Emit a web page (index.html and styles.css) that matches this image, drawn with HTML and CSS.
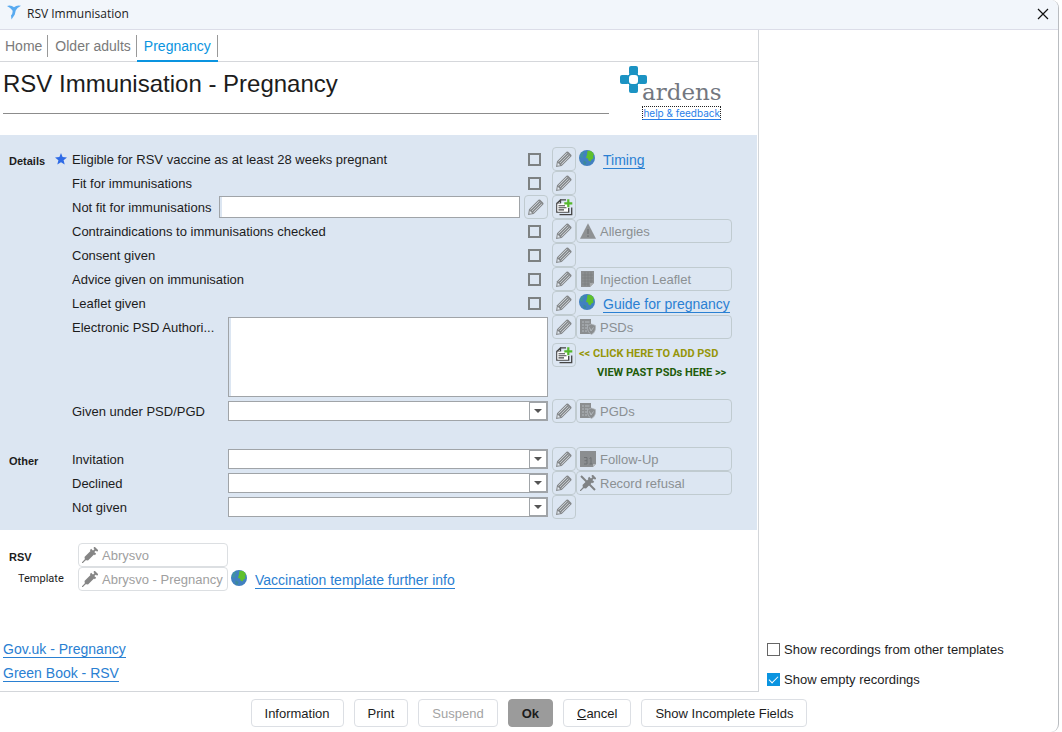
FILE: index.html
```html
<!DOCTYPE html>
<html lang="en">
<head>
<meta charset="utf-8">
<title>RSV Immunisation</title>
<link rel="stylesheet" href="styles.css">
</head>
<body>
<svg class="sprite" aria-hidden="true">
  <symbol id="pencil" viewBox="0 0 16 16">
    <path d="M0 16 1 10.300 10.500.8Q11.300 0 12.200.8L15.200 3.800Q16 4.700 15.200 5.500L5.700 15Z" fill="#85888a"/>
    <path d="M2.600 10.600 11 2.200M5.400 13.400 13.800 5" stroke="#e2e8ee" stroke-width=".9"/>
    <path d="M4 12 12.400 3.600" stroke="#cfd5da" stroke-width=".8"/>
    <path d="M1.800 11.800 4.200 14.200 1.300 14.700Z" fill="#e2e8ee"/>
  </symbol>
  <symbol id="notes" viewBox="0 0 17 17">
    <path d="M4.500.9H10M.8 4.500 4.500.9V4.500H.8V13.200H12.700V9" fill="#fff" stroke="#444" stroke-width="1.300"/>
    <path d="M1.500 4.500H12V12.600H1.500Z" fill="#fff"/>
    <path d="M3.500 15.600H15.700V8.500" fill="none" stroke="#444" stroke-width="1.300"/>
    <path d="M2.500 6.700H9M2.500 8.800H10.500M2.500 10.900H8" stroke="#444" stroke-width="1.100"/>
    <path d="M12.300.3V8.300M8.300 4.300H16.300" stroke="#55b82b" stroke-width="2.200"/>
  </symbol>
  <symbol id="globe" viewBox="0 0 16 16">
    <circle cx="8" cy="8" r="8" fill="#4180c0"/>
    <path d="M8.500.8 12 .9Q14 2.200 15 4.500L14 6 14.500 8.500 12.500 9.500 11.500 11.500 9.500 10.500 9 8.500 7 8 8 4.500Z" fill="#5fc02c"/>
    <path d="M2 3 4.500 1.500 5.500 3 3.500 5 4.500 7 2.500 8 .8 6Z" fill="#3f93a0"/>
    <path d="M4.500 10.500 7.500 12 6.500 15 4.500 14Z" fill="#3a8a98"/>
  </symbol>
  <symbol id="warning" viewBox="0 0 16 16">
    <path d="M8 .3 16 15.800H0Z" fill="#8f9294"/>
    <path d="M8 6V11M8 12.200V14" stroke="#777a7c" stroke-width="1.600"/>
  </symbol>
  <symbol id="sheet" viewBox="0 0 16 16">
    <path d="M1 0H14V12L10 16H1Z" fill="#8b8e90"/>
    <path d="M2 4H13M2 7H13M2 10H13M2 13H9M5 1V15M8 1V15M11 1V12" stroke="#7b7e80" stroke-width=".7"/>
    <path d="M10 16V12H14Z" fill="#a7aaac"/>
  </symbol>
  <symbol id="protocol" viewBox="0 0 16 16">
    <path d="M0 0H11V15H0Z" fill="#8b8e90"/>
    <path d="M2 3H4M5 3H9.500M2 6H4M5 6H8M2 9H4M5 9H7M2 12H4M5 12H7" stroke="#b3b9be" stroke-width="1"/>
    <path d="M7.500 6.500 11.500 5 15.500 6.500Q16.300 13 11.500 15.600 6.800 13 7.500 6.500Z" fill="#8b8e90" stroke="#b3b9be" stroke-width=".7"/>
    <path d="M9.500 8.500 11 12 13.500 8.500" fill="none" stroke="#b3b9be" stroke-width="1"/>
  </symbol>
  <symbol id="calendar" viewBox="0 0 16 16">
    <path d="M0 0H16V13L13 16H0Z" fill="#8b8e90"/>
    <path d="M4 6.500H7V13H4M4.500 9.700H7M9.500 7.500 11 6.500V13M9.500 13H12.500" fill="none" stroke="#6f7274" stroke-width="1"/>
    <path d="M13 16V13H16Z" fill="#b4b8bb"/>
  </symbol>
  <symbol id="syringe" viewBox="0 0 16 16">
    <path d="M0 16 4 12" stroke="#858585" stroke-width="1.200"/>
    <path d="M2.500 10 9 3.500 12.500 7 6 13.500 3 13Z" fill="#858585"/>
    <path d="M8.500 2.500 13.500 7.500M11 5 14 2M12 .3 15.700 4" stroke="#858585" stroke-width="1.800"/>
  </symbol>
  <symbol id="refusal" viewBox="0 0 16 16">
    <path d="M0 16 4 12" stroke="#808385" stroke-width="1.200"/>
    <path d="M2.500 10 9 3.500 12.500 7 6 13.500 3 13Z" fill="#808385"/>
    <path d="M8.500 2.500 13.500 7.500M11 5 14 2M12 .3 15.700 4M1 1 15 15" stroke="#808385" stroke-width="2"/>
  </symbol>
</svg>

<div class="window">
  <header class="titlebar">
    <svg class="app-icon" viewBox="0 0 14 15" aria-hidden="true"><path d="M0 1Q4-.2 7 2.200 10-.4 14 .8 10.500 2.500 8.700 5.500L7.800 9.500 4.500 14.500 4 10.500Q6 8.500 5.500 5.500 3.500 2.500 0 1Z" fill="#58aaf0"/></svg>
    <span class="window-title">RSV Immunisation</span>
    <button class="close" type="button" aria-label="Close"><svg viewBox="0 0 12 12"><path d="M1 1 11 11M11 1 1 11" stroke="#111" stroke-width="1.200"/></svg></button>
  </header>

  <div class="content">
    <main class="panel">
      <nav class="tabs">
        <button class="tab" type="button">Home</button>
        <button class="tab" type="button">Older adults</button>
        <button class="tab tab-active" type="button">Pregnancy</button>
      </nav>

      <div class="heading">
        <h1 class="title">RSV Immunisation - Pregnancy</h1>
        <div class="brand">
          <div class="logo">
            <svg class="logo-mark" viewBox="0 0 28 28" aria-hidden="true"><g fill="#1b93c3"><rect x="9" y="0" width="9" height="9" rx="2"/><rect x="0" y="9" width="9" height="9" rx="2"/><rect x="18" y="9" width="9" height="9" rx="2"/><rect x="9" y="18" width="9" height="9" rx="2"/></g><path d="M9 8H18V9H19V18H18V19H9V18H8V9H9Z" fill="#1b93c3"/><rect x="9" y="9" width="9" height="9" rx="3" fill="#fff"/></svg>
            <span class="logo-name">ardens</span>
          </div>
          <a class="help" href="#">help &amp; feedback</a>
        </div>
      </div>

      <form class="form">
        <div class="row">
          <span class="section">Details</span>
          <svg class="star" viewBox="0 0 12 12" aria-hidden="true"><path d="M6 0 7.600 4.100 12 4.400 8.600 7.200 9.700 11.600 6 9.200 2.300 11.600 3.400 7.200 0 4.400 4.400 4.100Z" fill="#2f6be6"/></svg>
          <div class="entry"><label for="eligible">Eligible for RSV vaccine as at least 28 weeks pregnant</label><input class="check" id="eligible" type="checkbox"></div>
          <button class="tool" type="button" aria-label="Edit eligibility"><svg><use href="#pencil"/></svg></button>
          <div class="link-line"><svg><use href="#globe"/></svg><a class="link" href="#">Timing</a></div>
        </div>
        <div class="row">
          <div class="entry"><label for="fit">Fit for immunisations</label><input class="check" id="fit" type="checkbox"></div>
          <button class="tool" type="button" aria-label="Edit fitness"><svg><use href="#pencil"/></svg></button>
        </div>
        <div class="row">
          <div class="entry entry-text"><label for="notfit">Not fit for immunisations</label><input class="text" id="notfit" type="text"><button class="tool" type="button" aria-label="Edit reason"><svg><use href="#pencil"/></svg></button></div>
          <button class="tool" type="button" aria-label="Add note"><svg class="notes"><use href="#notes"/></svg></button>
        </div>
        <div class="row">
          <div class="entry"><label for="contra">Contraindications to immunisations checked</label><input class="check" id="contra" type="checkbox"></div>
          <button class="tool" type="button" aria-label="Edit contraindications"><svg><use href="#pencil"/></svg></button>
          <button class="action" type="button" disabled><svg><use href="#warning"/></svg><span>Allergies</span></button>
        </div>
        <div class="row">
          <div class="entry"><label for="consent">Consent given</label><input class="check" id="consent" type="checkbox"></div>
          <button class="tool" type="button" aria-label="Edit consent"><svg><use href="#pencil"/></svg></button>
        </div>
        <div class="row">
          <div class="entry"><label for="advice">Advice given on immunisation</label><input class="check" id="advice" type="checkbox"></div>
          <button class="tool" type="button" aria-label="Edit advice"><svg><use href="#pencil"/></svg></button>
          <button class="action" type="button" disabled><svg><use href="#sheet"/></svg><span>Injection Leaflet</span></button>
        </div>
        <div class="row">
          <div class="entry"><label for="leaflet">Leaflet given</label><input class="check" id="leaflet" type="checkbox"></div>
          <button class="tool" type="button" aria-label="Edit leaflet"><svg><use href="#pencil"/></svg></button>
          <div class="link-line"><svg><use href="#globe"/></svg><a class="link" href="#">Guide for pregnancy</a></div>
        </div>
        <div class="row row-tall">
          <div class="entry entry-field"><label for="psd">Electronic PSD Authori...</label><textarea class="text memo" id="psd"></textarea></div>
          <div class="tools">
            <button class="tool" type="button" aria-label="Edit authorisation"><svg><use href="#pencil"/></svg></button>
            <button class="tool" type="button" aria-label="Add PSD"><svg class="notes"><use href="#notes"/></svg></button>
          </div>
          <div class="psd">
            <button class="action" type="button" disabled><svg><use href="#protocol"/></svg><span>PSDs</span></button>
            <span class="hint hint-add">&lt;&lt; CLICK HERE TO ADD PSD</span>
            <span class="hint hint-view">VIEW PAST PSDs HERE &gt;&gt;</span>
          </div>
        </div>
        <div class="row">
          <div class="entry entry-field"><label for="given">Given under PSD/PGD</label><span class="combo"><select id="given"><option></option></select></span></div>
          <button class="tool" type="button" aria-label="Edit PSD/PGD"><svg><use href="#pencil"/></svg></button>
          <button class="action" type="button" disabled><svg><use href="#protocol"/></svg><span>PGDs</span></button>
        </div>
        <div class="row row-group">
          <span class="section">Other</span>
          <div class="entry entry-field"><label for="invitation">Invitation</label><span class="combo"><select id="invitation"><option></option></select></span></div>
          <button class="tool" type="button" aria-label="Edit invitation"><svg><use href="#pencil"/></svg></button>
          <button class="action" type="button" disabled><svg><use href="#calendar"/></svg><span>Follow-Up</span></button>
        </div>
        <div class="row">
          <div class="entry entry-field"><label for="declined">Declined</label><span class="combo"><select id="declined"><option></option></select></span></div>
          <button class="tool" type="button" aria-label="Edit declined"><svg><use href="#pencil"/></svg></button>
          <button class="action" type="button" disabled><svg><use href="#refusal"/></svg><span>Record refusal</span></button>
        </div>
        <div class="row">
          <div class="entry entry-field"><label for="notgiven">Not given</label><span class="combo"><select id="notgiven"><option></option></select></span></div>
          <button class="tool" type="button" aria-label="Edit not given"><svg><use href="#pencil"/></svg></button>
        </div>
      </form>

      <section class="templates">
        <div class="template-row">
          <span class="section">RSV</span>
          <button class="action action-light" type="button" disabled><svg><use href="#syringe"/></svg><span>Abrysvo</span></button>
        </div>
        <div class="template-row">
          <span class="caption">Template</span>
          <button class="action action-light" type="button" disabled><svg><use href="#syringe"/></svg><span>Abrysvo - Pregnancy</span></button>
          <div class="link-line"><svg><use href="#globe"/></svg><a class="link" href="#">Vaccination template further info</a></div>
        </div>
      </section>

      <div class="resources">
        <a class="link" href="#">Gov.uk - Pregnancy</a>
        <a class="link" href="#">Green Book - RSV</a>
      </div>
    </main>

    <aside class="options">
      <label class="option"><input class="check check-plain" type="checkbox"><span>Show recordings from other templates</span></label>
      <label class="option"><input class="check check-plain" type="checkbox" checked><span>Show empty recordings</span></label>
    </aside>
  </div>

  <footer class="footer">
    <button class="btn" type="button">Information</button>
    <button class="btn" type="button">Print</button>
    <button class="btn" type="button" disabled>Suspend</button>
    <button class="btn btn-ok" type="button">Ok</button>
    <button class="btn" type="button"><u>C</u>ancel</button>
    <button class="btn" type="button">Show Incomplete Fields</button>
  </footer>
</div>
</body>
</html>
```
FILE: styles.css
```css
*, *::before, *::after { box-sizing: border-box; }

body {
  margin: 0;
  background: #fff;
  color: #1c1c1c;
  font: 13px/16px "Liberation Sans", Arial, sans-serif;
}

button, input, select, textarea {
  margin: 0;
  font: inherit;
  color: inherit;
}

h1 { margin: 0; font-weight: normal; }

.sprite { display: none; }

.window {
  display: flex;
  flex-direction: column;
  min-height: 100vh;
  margin-right: 3px;
  border-right: 1px solid #b9bcc0;
  border-radius: 0 8px 8px 0;
}

/* Title bar */
.titlebar {
  display: flex;
  align-items: center;
  height: 30px;
  padding: 0 9px 2px 7px;
  background: #f2f6fb;
  border-bottom: 1px solid #dcdde8;
  border-radius: 0 8px 0 0;
}
.app-icon { width: 14px; height: 15px; margin-bottom: 3px; }
.window-title {
  flex: 1;
  margin-left: 6px;
  font: 12px/16px "Open Sans", "Noto Sans", sans-serif;
}
.close {
  width: 12px;
  height: 12px;
  padding: 0;
  border: 0;
  background: none;
}
.close svg { display: block; }

/* Panels */
.content {
  display: grid;
  grid-template-columns: 1fr 299px;
  flex: 1;
}
.panel {
  display: flex;
  flex-direction: column;
  border-right: 1px solid #d3d6da;
  border-bottom: 1px solid #d3d6da;
}

.tabs {
  display: flex;
  height: 32px;
  border-bottom: 1px solid #d5d7db;
}
.tab {
  position: relative;
  height: 32px;
  padding: 0 6px 0 7px;
  border: 0;
  background: none;
  color: #7a7a7a;
  font-size: 14px;
}
.tab:first-child { padding-left: 5px; }
.tab::after {
  content: "";
  position: absolute;
  top: 5px;
  right: 0;
  width: 1px;
  height: 22px;
  background: #999;
}
.tab-active {
  padding: 2px 7px 0;
  color: #0a94e0;
  border-bottom: 2px solid #0a94e0;
}

.heading {
  display: flex;
  justify-content: space-between;
  height: 73px;
}
.title {
  flex: 1;
  height: 52px;
  margin-left: 3px;
  border-bottom: 1px solid #8c8c8c;
  font-size: 24px;
  line-height: 44px;
}
.brand {
  display: flex;
  flex-direction: column;
  align-items: flex-end;
  width: 149px;
  padding: 4px 37px 0 11px;
}
.logo { display: flex; align-self: stretch; height: 40px; }
.logo-mark { flex: none; width: 28px; height: 28px; margin-right: -6px; }
.logo-name {
  padding-top: 12px;
  color: #737780;
  font: 23px/28px "DejaVu Serif", serif;
}
.help {
  border: 1px dotted #222;
  border-bottom: 1px solid #2a7fe8;
  color: #2a7fe8;
  font: 10px/12px Inter, Roboto, sans-serif;
  text-decoration: none;
}

/* Form */
.form {
  margin-right: 1px;
  padding: 12px 0 11px;
  background: #dce6f2;
}
.row {
  display: grid;
  grid-template-columns: 55px 17px 1fr 4px 24px 181px;
  align-items: center;
  min-height: 24px;
}
.row-tall { min-height: 84px; align-items: start; }
.row-group { margin-top: 24px; }
.section {
  padding: 4px 0 0 9px;
  font-size: 11px;
  font-weight: bold;
}
.row .section { grid-column: 1; grid-row: 1; }
.star { grid-column: 2; grid-row: 1; width: 12px; height: 12px; }
.entry {
  grid-column: 3;
  grid-row: 1;
  display: flex;
  justify-content: space-between;
  align-items: center;
}
.entry label, .action span, .option span { padding-top: 2px; }
.row > .tool, .tools { grid-column: 5; grid-row: 1; }
.row > .action, .row > .link-line, .psd { grid-column: 6; grid-row: 1; }

.check {
  position: relative;
  flex: none;
  appearance: none;
  width: 13px;
  height: 13px;
  margin-right: 7px;
  border: 2px solid #7d8182;
}
.check-plain { border: 1px solid #666; margin-right: 4px; }
.check-plain:checked { background: #0a94e0; border-color: #0a94e0; }
.check-plain:checked::after {
  content: "";
  position: absolute;
  left: 1px;
  top: 2px;
  width: 9px;
  height: 5px;
  border: solid #fff;
  border-width: 0 0 1px 1px;
  transform: rotate(-45deg);
}

.text {
  flex: 1;
  min-width: 0;
  height: 22px;
  border: 1px solid #a0a4a8;
  border-radius: 0;
  background: #fff;
  box-shadow: inset 2px 0 #dce6f2;
}
.entry-text label { padding-right: 8px; }
.entry-text .tool { margin-left: 4px; }
.entry-field label { flex: 0 0 156px; }
.memo { height: 80px; padding: 2px 4px; resize: none; }
.row-tall .entry { align-items: flex-start; padding-top: 2px; }
.row-tall .entry label { padding-top: 3px; }

.combo { position: relative; flex: 1; height: 20px; }
.combo select {
  display: block;
  width: 100%;
  height: 20px;
  appearance: none;
  border: 1px solid #a0a4a8;
  border-right-width: 2px;
  border-radius: 0;
  background: #fff;
}
.combo::before {
  content: "";
  position: absolute;
  right: 1px;
  top: 1px;
  width: 18px;
  height: 18px;
  border: 1px solid #a0a4a8;
  pointer-events: none;
}
.combo::after {
  content: "";
  position: absolute;
  right: 6px;
  top: 8px;
  border: 4px solid transparent;
  border-top-color: #555;
  border-bottom: 0;
  pointer-events: none;
}

.tool {
  display: grid;
  place-items: center;
  flex: none;
  width: 24px;
  height: 24px;
  padding: 0;
  border: 1px solid #c0cbd0;
  border-radius: 4px;
  background: none;
}
.tool svg { width: 16px; height: 16px; }
.tool .notes { width: 17px; height: 17px; }
.tools { display: grid; gap: 4px; }

.action {
  display: flex;
  align-items: center;
  gap: 4px;
  width: 156px;
  height: 24px;
  padding: 0 3px;
  border: 1px solid #c0cbd0;
  border-radius: 4px;
  background: none;
  color: #8b9093;
  white-space: nowrap;
}
.action svg { flex: none; width: 16px; height: 16px; }
.action-light { width: 150px; color: #a0a0a0; border-color: #dcdfe2; }

.link-line {
  display: flex;
  align-items: center;
  gap: 8px;
  padding-left: 3px;
}
.link-line svg { width: 16px; height: 16px; margin-bottom: 3px; }
.link {
  border-bottom: 1px solid #2a80d2;
  color: #2a80d2;
  font-size: 14px;
  line-height: 15px;
  text-decoration: none;
  white-space: nowrap;
}
.link-line .link { margin-top: 3px; }

.psd { display: flex; flex-direction: column; }
.hint { font: bold 11px/19px Roboto, sans-serif; }
.hint-add { margin: 5px 0 0 3px; color: #96960a; }
.hint-view { margin-left: 21px; color: #1f5c0a; }

/* Templates and links */
.templates { padding-top: 13px; }
.template-row {
  display: grid;
  grid-template-columns: 78px 150px 1fr;
  align-items: center;
}
.caption { padding-left: 18px; font: 11px/16px Roboto, sans-serif; }
.resources {
  display: flex;
  flex-direction: column;
  align-items: flex-start;
  gap: 8px;
  margin-top: auto;
  padding: 0 3px 9px;
}

.options {
  display: flex;
  flex-direction: column;
  justify-content: flex-end;
  gap: 12px;
  padding: 0 8px 4px;
}
.option { display: flex; align-items: center; }

/* Footer */
.footer {
  display: flex;
  justify-content: center;
  gap: 10px;
  padding: 7px 0 5px;
}
.btn {
  height: 28px;
  padding: 1px 13px 0;
  border: 1px solid #dcdfe4;
  border-radius: 4px;
  background: #fff;
}
.btn:disabled { color: #a3a3a3; }
.btn-ok { border-color: #9b9b9b; background: #9b9b9b; font-weight: bold; }
```
